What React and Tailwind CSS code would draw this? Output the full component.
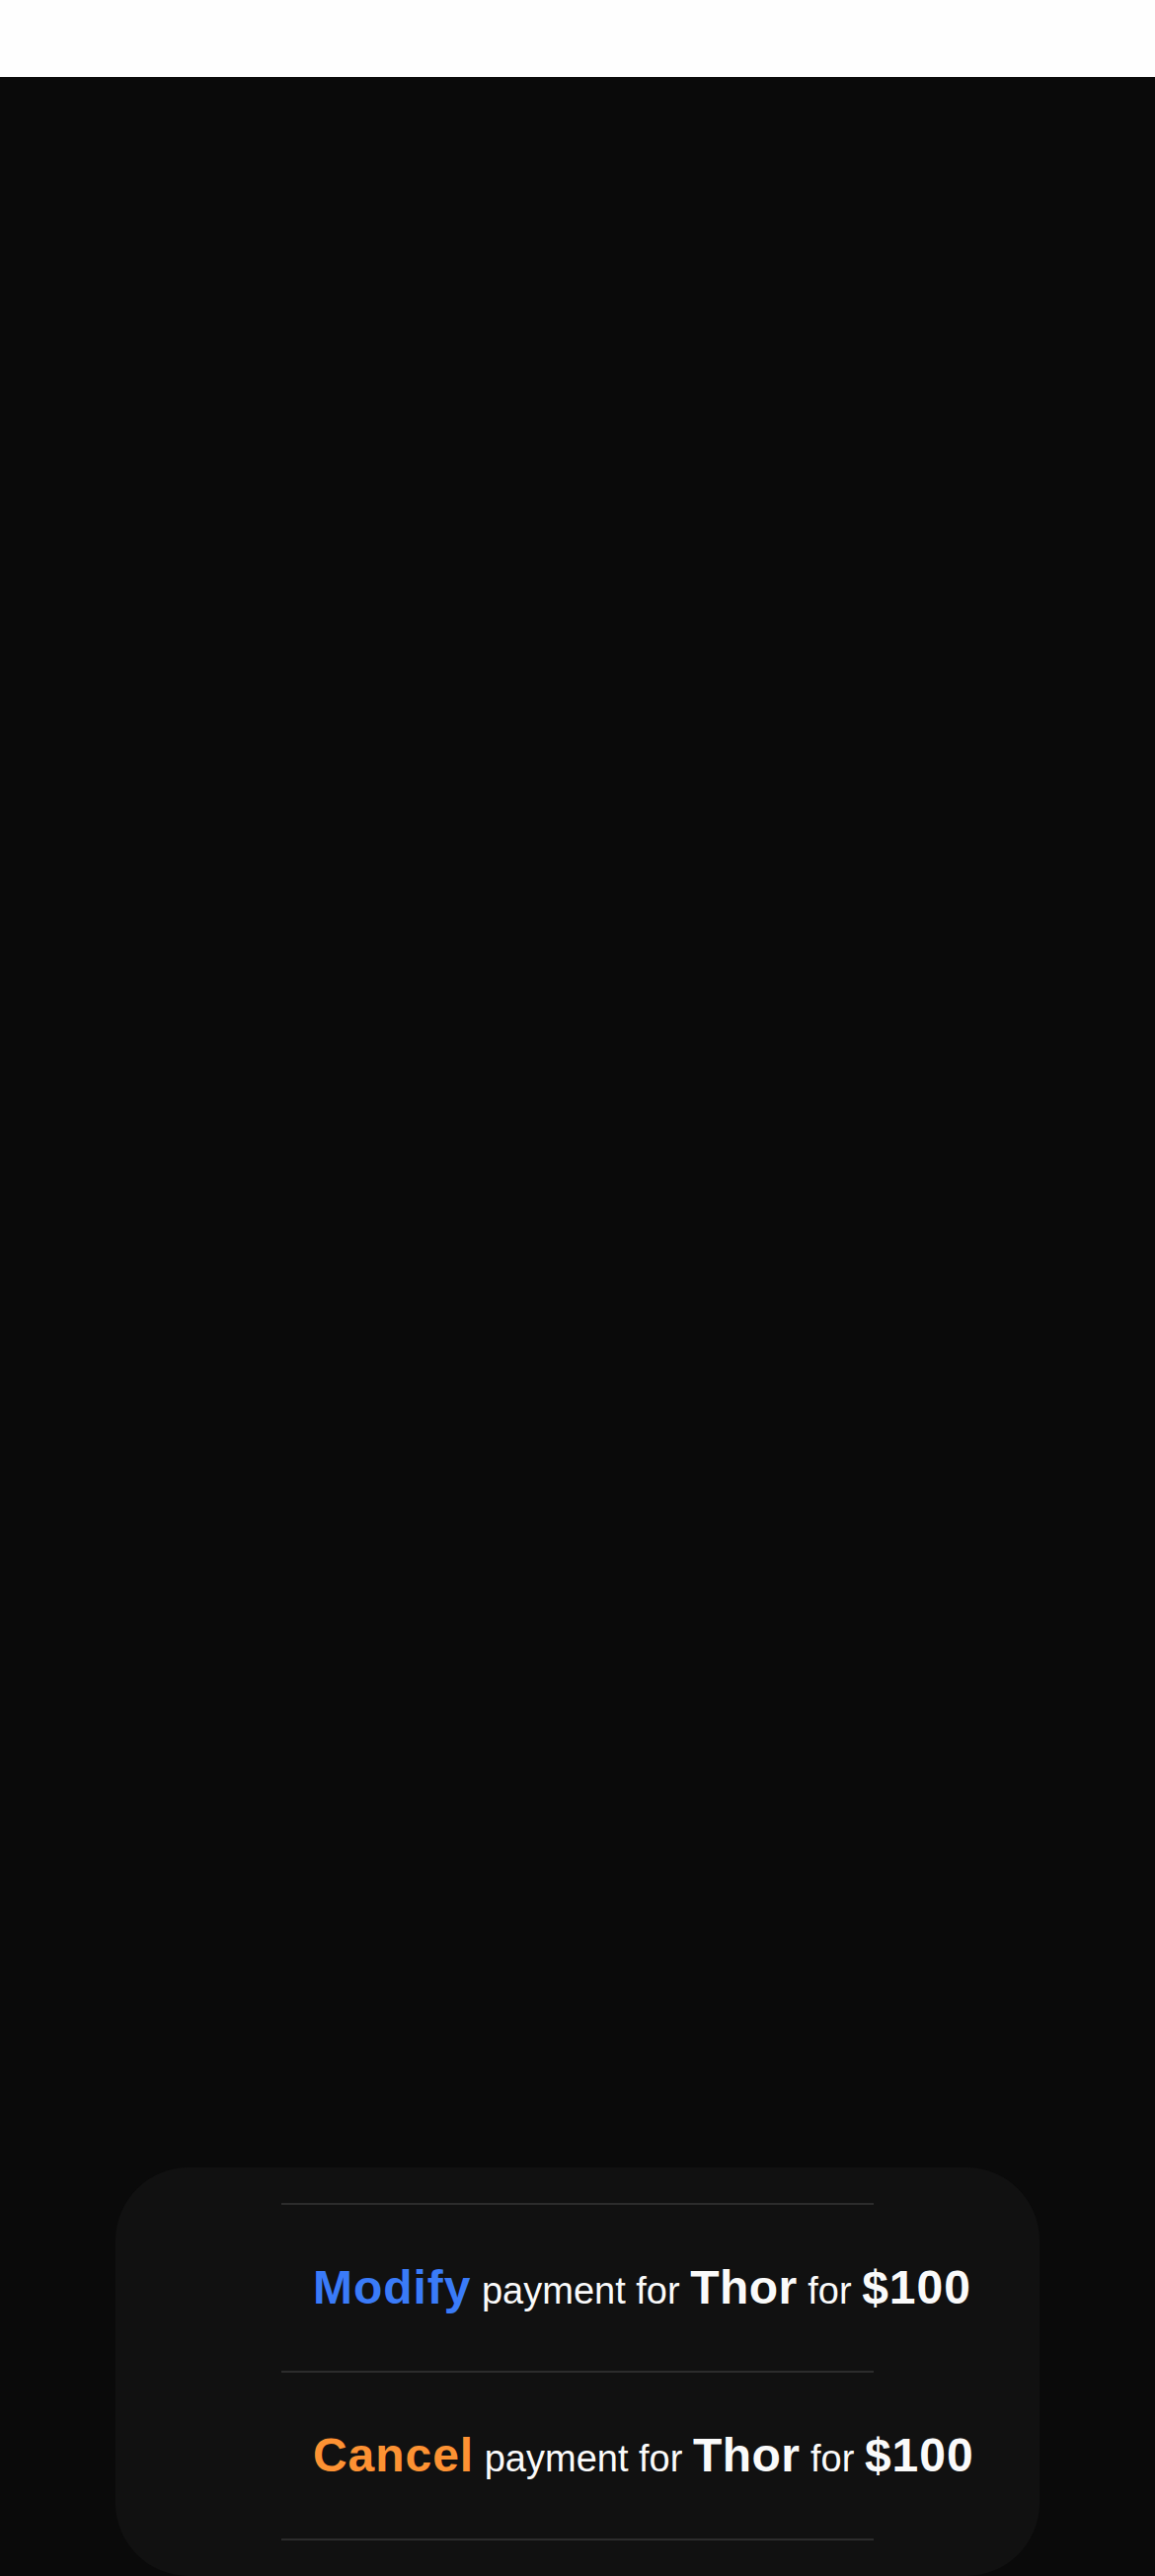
import React from 'react';

const rows = [
  { action: 'Modify', color: 'text-[#3a7bf8]' },
  { action: 'Cancel', color: 'text-[#fd9233]' },
];

const PaymentRow = ({ action, color }) => (
  <div className="h-[168px] flex items-center pl-[32px] whitespace-nowrap">
    <p className="text-[#fafafa] leading-none" style={{ fontFamily: '"Liberation Sans", Arial, sans-serif' }}>
      <span className={`text-[48px] font-bold tracking-[0.02em] ${color}`}>{action}</span>
      <span className="text-[38px]"> payment for </span>
      <span className="text-[48px] font-bold tracking-[0.01em]">Thor</span>
      <span className="text-[38px]"> for </span>
      <span className="text-[48px] font-bold tracking-[0.02em]">$100</span>
    </p>
  </div>
);

const App = () => {
  return (
    <div className="h-[2610px] flex flex-col bg-[#0a0a0a]">
      <header className="h-[78px] bg-[#fefefe] shrink-0" />
      <main className="flex-1 flex flex-col justify-end">
        <div className="mx-auto w-[936px] h-[414px] bg-[#111111] rounded-[74px] pt-[36px]">
          <div className="mx-auto w-[600px] border-t-2 border-[#2c2c2c]">
            {rows.map((row) => (
              <div key={row.action} className="border-b-2 border-[#2c2c2c]">
                <PaymentRow action={row.action} color={row.color} />
              </div>
            ))}
          </div>
        </div>
      </main>
    </div>
  );
};

export default App;
